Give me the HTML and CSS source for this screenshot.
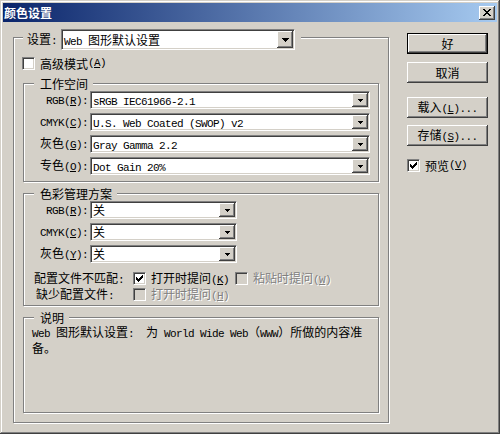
FILE: index.html
```html
<!DOCTYPE html>
<html lang="zh-CN">
<head>
    <meta charset="UTF-8">
    <title>颜色设置</title>
    <link rel="stylesheet" href="styles.css">
</head>
<body>
<div class="window">
    <div class="titlebar">
        <span class="title">颜色设置</span>
        <span class="close">
            <svg width="8" height="7" viewBox="0 0 8 7" shape-rendering="crispEdges"><path d="M0 0h2v1h-2zM6 0h2v1h-2zM1 1h2v1h-2zM5 1h2v1h-2zM2 2h4v1h-4zM3 3h2v1h-2zM2 4h4v1h-4zM1 5h2v1h-2zM5 5h2v1h-2zM0 6h2v1h-2zM6 6h2v1h-2z"/></svg>
        </span>
    </div>

    <div class="content">
        <div class="group outer">
            <div class="setrow">
                <span class="setlabel">设置<span class="en">:</span></span>
                <div class="select big">
                    <div class="val"><span class="en">Web </span>图形默认设置</div>
                    <div class="drop"><svg width="7" height="4" viewBox="0 0 7 4" shape-rendering="crispEdges"><path d="M0 0h7v1h-7zM1 1h5v1h-5zM2 2h3v1h-3zM3 3h1v1h-1z"/></svg></div>
                </div>
            </div>

            <div class="check adv"><span class="box"></span>高级模式<span class="en">(<u>A</u>)</span></div>

            <div class="group inner ws">
                <div class="legend">工作空间</div>
                <div class="frow">
                    <span class="flabel"><span class="en">RGB(<u>R</u>):</span></span>
                    <div class="select long">
                        <div class="val"><span class="en">sRGB IEC61966-2.1</span></div>
                        <div class="drop"><svg width="5" height="3" viewBox="0 0 5 3" shape-rendering="crispEdges"><path d="M0 0h5v1h-5zM1 1h3v1h-3zM2 2h1v1h-1z"/></svg></div>
                    </div>
                </div>
                <div class="frow">
                    <span class="flabel"><span class="en">CMYK(<u>C</u>):</span></span>
                    <div class="select long">
                        <div class="val"><span class="en">U.S. Web Coated (SWOP) v2</span></div>
                        <div class="drop"><svg width="5" height="3" viewBox="0 0 5 3" shape-rendering="crispEdges"><path d="M0 0h5v1h-5zM1 1h3v1h-3zM2 2h1v1h-1z"/></svg></div>
                    </div>
                </div>
                <div class="frow">
                    <span class="flabel">灰色<span class="en">(<u>G</u>):</span></span>
                    <div class="select long">
                        <div class="val"><span class="en">Gray Gamma 2.2</span></div>
                        <div class="drop"><svg width="5" height="3" viewBox="0 0 5 3" shape-rendering="crispEdges"><path d="M0 0h5v1h-5zM1 1h3v1h-3zM2 2h1v1h-1z"/></svg></div>
                    </div>
                </div>
                <div class="frow">
                    <span class="flabel">专色<span class="en">(<u>O</u>):</span></span>
                    <div class="select long">
                        <div class="val"><span class="en">Dot Gain 20%</span></div>
                        <div class="drop"><svg width="5" height="3" viewBox="0 0 5 3" shape-rendering="crispEdges"><path d="M0 0h5v1h-5zM1 1h3v1h-3zM2 2h1v1h-1z"/></svg></div>
                    </div>
                </div>
            </div>

            <div class="group inner cm">
                <div class="legend">色彩管理方案</div>
                <div class="frow">
                    <span class="flabel"><span class="en">RGB(<u>R</u>):</span></span>
                    <div class="select short">
                        <div class="val">关</div>
                        <div class="drop"><svg width="5" height="3" viewBox="0 0 5 3" shape-rendering="crispEdges"><path d="M0 0h5v1h-5zM1 1h3v1h-3zM2 2h1v1h-1z"/></svg></div>
                    </div>
                </div>
                <div class="frow">
                    <span class="flabel"><span class="en">CMYK(<u>C</u>):</span></span>
                    <div class="select short">
                        <div class="val">关</div>
                        <div class="drop"><svg width="5" height="3" viewBox="0 0 5 3" shape-rendering="crispEdges"><path d="M0 0h5v1h-5zM1 1h3v1h-3zM2 2h1v1h-1z"/></svg></div>
                    </div>
                </div>
                <div class="frow">
                    <span class="flabel">灰色<span class="en">(<u>Y</u>):</span></span>
                    <div class="select short">
                        <div class="val">关</div>
                        <div class="drop"><svg width="5" height="3" viewBox="0 0 5 3" shape-rendering="crispEdges"><path d="M0 0h5v1h-5zM1 1h3v1h-3zM2 2h1v1h-1z"/></svg></div>
                    </div>
                </div>

                <div class="crow first">
                    <span class="clabel">配置文件不匹配<span class="en">:</span></span>
                    <span class="box"><svg width="7" height="7" viewBox="0 0 7 7" shape-rendering="crispEdges"><path d="M6 0h1v1h-1zM5 1h2v1h-2zM0 2h1v1h-1zM4 2h3v1h-3zM0 3h2v1h-2zM3 3h3v1h-3zM0 4h5v1h-5zM1 5h3v1h-3zM2 6h1v1h-1z"/></svg></span>
                    <span class="ctext">打开时提问<span class="en">(<u>K</u>)</span></span>
                    <span class="box off second"></span>
                    <span class="ctext dis">粘贴时提问<span class="en">(<u>W</u>)</span></span>
                </div>
                <div class="crow">
                    <span class="clabel missing">缺少配置文件<span class="en">:</span></span>
                    <span class="box off"></span>
                    <span class="ctext dis">打开时提问<span class="en">(<u>H</u>)</span></span>
                </div>
            </div>

            <div class="group inner desc">
                <div class="legend">说明</div>
                <p class="note"><span class="en">Web </span>图形默认设置<span class="en">:  </span>为<span class="en"> World Wide Web</span>（<span class="en">WWW</span>）所做的内容准<br>备。</p>
            </div>
        </div>

        <div class="side">
            <button class="btn default">好</button>
            <button class="btn cancel">取消</button>
            <button class="btn load">载入<span class="en">(<u>L</u>)...</span></button>
            <button class="btn save">存储<span class="en">(<u>S</u>)...</span></button>
            <div class="check preview">
                <span class="box"><svg width="7" height="7" viewBox="0 0 7 7" shape-rendering="crispEdges"><path d="M6 0h1v1h-1zM5 1h2v1h-2zM0 2h1v1h-1zM4 2h3v1h-3zM0 3h2v1h-2zM3 3h3v1h-3zM0 4h5v1h-5zM1 5h3v1h-3zM2 6h1v1h-1z"/></svg></span>预览<span class="en">(<u>V</u>)</span>
            </div>
        </div>
    </div>
</div>
</body>
</html>
```

FILE: styles.css
```css
body {
    margin: 0;
    background: #d4d0c8;
    font-family: "Noto Sans CJK SC", sans-serif;
    font-size: 12px;
    line-height: 14px;
    color: #000;
}
.window {
    width: 500px;
    height: 434px;
    box-sizing: border-box;
    padding: 3px;
    background: #d4d0c8;
    box-shadow: inset -1px -1px #404040, inset 1px 1px #d4d0c8, inset -2px -2px #808080, inset 2px 2px #fff;
}
.en {
    font-family: "Liberation Mono", monospace;
    font-size: 11px;
    letter-spacing: -0.6px;
    white-space: pre;
}

/* title bar */
.titlebar {
    height: 19px;
    display: flex;
    align-items: center;
    justify-content: space-between;
    padding: 0 2px 0 1px;
    background: linear-gradient(to right, #0a246a, #a6caf0);
}
.title {
    color: #fff;
    font-weight: bold;
    line-height: 19px;
}
.close {
    width: 16px;
    height: 14px;
    display: flex;
    align-items: center;
    justify-content: center;
    background: #d4d0c8;
    box-shadow: inset -1px -1px #404040, inset 1px 1px #fff, inset -2px -2px #808080;
}

.content {
    display: flex;
    align-items: flex-start;
    padding-left: 10px;
}

/* etched group boxes */
.group {
    box-sizing: border-box;
    border: 1px solid #808080;
    box-shadow: 1px 1px #fff, inset 1px 1px #fff;
}
.outer {
    width: 376px;
    margin-top: 15px;
    padding-bottom: 9px;
}
.inner {
    width: 356px;
    margin-left: 9px;
}
.legend {
    width: max-content;
    margin: -7px 0 0 10px;
    padding: 0 5px 0 6px;
    background: #d4d0c8;
    line-height: 14px;
}
.ws {
    margin-top: 12px;
    padding-bottom: 6px;
}
.cm {
    margin-top: 11px;
    padding-bottom: 3px;
}
.desc {
    margin-top: 11px;
    height: 96px;
}
.note {
    margin: 0;
    padding: 0 8px;
    line-height: 13px;
}

.setrow {
    width: max-content;
    height: 21px;
    display: flex;
    align-items: center;
    margin: -9px 0 0 9px;
    padding: 0 6px 0 4px;
    background: #d4d0c8;
}
.setlabel {
    width: 34px;
}

/* combo boxes */
.select {
    display: flex;
    box-sizing: border-box;
    padding: 1px;
    background: #fff;
    border: 1px solid;
    border-color: #808080 #fff #fff #808080;
    box-shadow: inset 1px 1px #404040, inset -1px -1px #d4d0c8;
}
.select.big {
    width: 234px;
    height: 21px;
    line-height: 17px;
}
.select.long {
    width: 280px;
    height: 18px;
    line-height: 14px;
}
.select.short {
    width: 147px;
    height: 18px;
    line-height: 14px;
}
.val {
    flex: 1;
    padding-left: 1px;
    white-space: nowrap;
}
.drop {
    width: 16px;
    flex: none;
    display: flex;
    align-items: center;
    justify-content: center;
    background: #d4d0c8;
    box-shadow: inset -1px -1px #404040, inset 1px 1px #fff, inset -2px -2px #808080;
}

.frow {
    display: flex;
    align-items: center;
    height: 18px;
    margin-top: 4px;
}
.legend + .frow {
    margin-top: 0;
}
.flabel {
    width: 64px;
    margin-right: 2px;
    text-align: right;
    white-space: nowrap;
}

/* check boxes */
.box {
    width: 13px;
    height: 13px;
    flex: none;
    box-sizing: border-box;
    display: flex;
    align-items: center;
    justify-content: center;
    margin-right: 5px;
    background: #fff;
    border: 1px solid;
    border-color: #808080 #fff #fff #808080;
    box-shadow: inset 1px 1px #404040, inset -1px -1px #d4d0c8;
}
.box.off {
    background: #d4d0c8;
}
.check {
    display: flex;
    align-items: center;
    height: 15px;
    line-height: 15px;
}
.adv {
    margin: 6px 0 0 8px;
}
.crow {
    display: flex;
    align-items: flex-start;
    height: 16px;
    line-height: 16px;
    padding-left: 10px;
}
.crow.first {
    margin-top: 7px;
}
.crow .box {
    margin-top: 2px;
}
.clabel {
    width: 99px;
    white-space: nowrap;
}
.clabel.missing {
    padding-left: 2px;
    width: 97px;
}
.box.second {
    margin-left: 6px;
}
.dis {
    color: #808080;
    text-shadow: 1px 1px #fff;
}

/* right column */
.side {
    display: flex;
    flex-direction: column;
    align-items: flex-start;
    margin: 11px 0 0 18px;
}
.btn {
    width: 81px;
    height: 21px;
    box-sizing: border-box;
    padding: 0;
    border: none;
    background: #d4d0c8;
    font: inherit;
    line-height: 19px;
    color: #000;
    box-shadow: inset -1px -1px #404040, inset 1px 1px #fff, inset -2px -2px #808080, inset 2px 2px #d4d0c8;
}
.btn.default {
    border: 1px solid #000;
}
.btn.cancel {
    margin-top: 8px;
}
.btn.load {
    margin-top: 14px;
}
.btn.save {
    margin-top: 7px;
}
.preview {
    margin-top: 12px;
}
```
